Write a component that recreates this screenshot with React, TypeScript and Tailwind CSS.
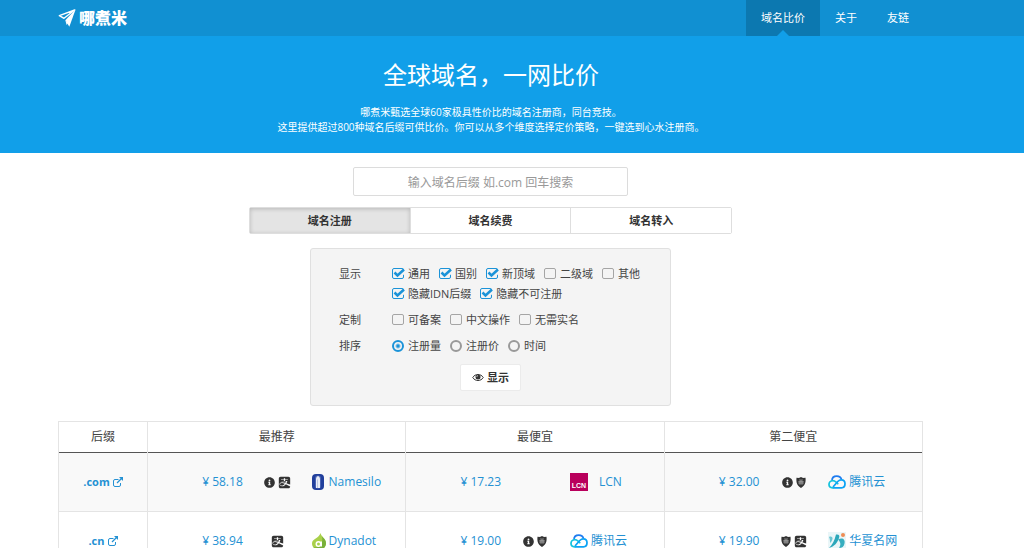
import { useState, type ReactNode } from "react";
import { FaAlipay, FaInfoCircle } from "react-icons/fa";

type Offer = {
  price: string;
  marks: ("info" | "alipay" | "shield")[];
  logo: ReactNode;
  name: string;
};

function PlaneLogo() {
  return (
    <svg viewBox="0 0 54 54" className="h-[18px] w-[18px]">
      <path d="M50 3 4 20l14 8z" fill="none" stroke="#fff" strokeWidth="4" strokeLinejoin="round" />
      <path d="M53 1 22 34l12 19z" fill="#fff" />
      <path d="M22 34l4 14 4-6z" fill="#fff" />
    </svg>
  );
}

function ExternalIcon() {
  return (
    <svg viewBox="0 0 20 20" className="h-[10px] w-[10px]" fill="none" stroke="currentColor" strokeWidth="2">
      <path d="M11 5H4a3 3 0 0 0-3 3v8a3 3 0 0 0 3 3h8a3 3 0 0 0 3-3v-4" />
      <path d="M8 12 17 3" strokeWidth="2.5" />
      <path d="M12 0h8v8z" fill="currentColor" stroke="none" />
    </svg>
  );
}

function EyeIcon() {
  return (
    <svg viewBox="0 0 24 18" className="h-[9px] w-3">
      <path d="M1.500 9C6 1 18 1 22.500 9 18 17 6 17 1.500 9z" fill="none" stroke="#333" strokeWidth="2" />
      <circle cx="12" cy="8" r="5" fill="#333" />
      <path d="M9.500 8q0-3 2.500-3" fill="none" stroke="#fff" strokeWidth="1.200" />
    </svg>
  );
}

function ShieldIcon() {
  return (
    <svg viewBox="0 0 20 22" className="h-[11px] w-[10px]">
      <path d="M10 0c3 2 6 2 9 1.500 1 9-1 16-9 20.500C2 17.500 0 10.500 1 1.500 4 2 7 2 10 0z" fill="#333" />
      <path d="M6 6h8M5 9h10M6 9v5h8V9M10 6v8M6 11.500h8" stroke="#bbb" strokeWidth="1.200" fill="none" />
    </svg>
  );
}

function NamesiloLogo() {
  return (
    <svg viewBox="0 0 24 32" className="mr-0.5 h-4 w-3">
      <rect width="24" height="32" rx="8" fill="#213f9c" />
      <rect x="6" y="3" width="12" height="26" rx="5" fill="#4a64b4" />
      <path d="M8 28V9q1-5 4-5t4 5v19z" fill="#e9edf7" />
      <path d="M10 28V11h1v17z" fill="#8c9bcf" />
    </svg>
  );
}

function DynadotLogo() {
  return (
    <svg viewBox="0 0 28 34" className="h-[17px] w-[14px]">
      <path d="M17 0c1 7 11 11 11 20 0 8-6 14-14 14S0 28 0 21C0 11 14 11 17 0z" fill="#a9d04a" />
      <path d="M20 7c4 4 8 8 8 13 0 8-6 14-14 14-5 0-9-2-11-5 13 1 20-9 17-22z" fill="#79b03a" />
      <circle cx="13" cy="22" r="4.500" fill="none" stroke="#fff" strokeWidth="3" />
      <path d="M18.500 17v10" stroke="#fff" strokeWidth="3" />
    </svg>
  );
}

function LcnLogo() {
  return (
    <span className="mr-2 flex h-[18px] w-[18px] items-end justify-center bg-[#b9005c] font-['Liberation_Sans'] text-[7px] leading-[10px] font-bold text-white">
      LCN
    </span>
  );
}

function TencentLogo() {
  return (
    <svg viewBox="0 0 36 28" className="h-[14px] w-[18px]" fill="none" strokeWidth="3.500" strokeLinejoin="round">
      <path d="M8 11C8 5 12 2 17.500 2S26 5 27 9" stroke="#1f7cf0" />
      <path d="M12 25.500H9C4.500 25.500 2 22 2 18.500S5 11 9.500 11c3 0 5 1.500 7 3.500l4 4" stroke="#14c3dd" />
      <path d="M11 25.500h16c4.500 0 7-3.500 7-8s-3-8-7.500-8c-3 0-5 1.500-7 3.500L10 24" stroke="#0ba3f5" />
    </svg>
  );
}

function HuaxiaLogo() {
  return (
    <svg viewBox="0 0 36 36" className="h-[18px] w-[18px]">
      <rect width="36" height="36" fill="#eaf6f8" />
      <path d="M2 10c4-2 8 0 7 4s-3 6-5 8c0-4 0-8-2-12z" fill="#6cc5d2" />
      <path d="M16 5c6-1 8 2 6 7-3 9-9 17-20 20 7-7 11-15 14-27z" fill="#2ba7ba" />
      <path d="M20 15c9-5 15 0 13 8-1 6-5 9-11 9 4-6 4-11-2-17z" fill="#38aebf" />
      <circle cx="30" cy="6" r="4" fill="#ef8d55" />
    </svg>
  );
}

const rows: { suffix: string; offers: Offer[] }[] = [
  {
    suffix: ".com",
    offers: [
      { price: "58.18", marks: ["info", "alipay"], logo: <NamesiloLogo />, name: "Namesilo" },
      { price: "17.23", marks: [], logo: <LcnLogo />, name: "LCN" },
      { price: "32.00", marks: ["info", "shield"], logo: <TencentLogo />, name: "腾讯云" },
    ],
  },
  {
    suffix: ".cn",
    offers: [
      { price: "38.94", marks: ["alipay"], logo: <DynadotLogo />, name: "Dynadot" },
      { price: "19.00", marks: ["info", "shield"], logo: <TencentLogo />, name: "腾讯云" },
      { price: "19.90", marks: ["shield", "alipay"], logo: <HuaxiaLogo />, name: "华夏名网" },
    ],
  },
];

const showOptions = [
  { label: "通用", on: true },
  { label: "国别", on: true },
  { label: "新顶域", on: true },
  { label: "二级域", on: false },
  { label: "其他", on: false },
  { label: "隐藏IDN后缀", on: true },
  { label: "隐藏不可注册", on: true },
];

const customOptions = [
  { label: "可备案", on: false },
  { label: "中文操作", on: false },
  { label: "无需实名", on: false },
];

function CheckOption({ label, on }: { label: string; on: boolean }) {
  return (
    <label className="flex items-center gap-1">
      <span className="relative flex h-3 w-3">
        <input
          type="checkbox"
          defaultChecked={on}
          className="peer h-[11px] w-3 appearance-none rounded-[2px] border border-[#a5a5a5] checked:border-[#1b93d8]"
        />
        <svg
          viewBox="0 0 26 24"
          className="pointer-events-none absolute top-0 left-0 hidden h-3 w-[13px] peer-checked:block"
        >
          <path d="M20 9 25 4v8l-5 4z" fill="#f4f4f4" />
          <path d="M5 9l6 6L24 3" fill="none" stroke="#1b93d8" strokeWidth="5" />
        </svg>
      </span>
      {label}
    </label>
  );
}

function FilterRow({ title, children }: { title: string; children: ReactNode }) {
  return (
    <fieldset className="flex">
      <legend className="float-left w-[53px] shrink-0">{title}</legend>
      <div className="flex flex-wrap gap-x-[9px]">{children}</div>
    </fieldset>
  );
}

function OfferCell({ offer }: { offer: Offer }) {
  return (
    <td className="border-x border-[#e4e4e4] p-0">
      <div className="grid grid-cols-[95fr_69fr_94fr] items-center">
        <a href="#" className="text-right whitespace-nowrap">
          ¥ {offer.price}
        </a>
        <span className="flex items-center justify-center gap-[3px] text-[#333]">
          {offer.marks.map((mark) => {
            if (mark === "info") return <FaInfoCircle key={mark} size={11} />;
            if (mark === "alipay") return <FaAlipay key={mark} size={13} />;
            return <ShieldIcon key={mark} />;
          })}
        </span>
        <a href="#" className="flex items-center gap-[3px] whitespace-nowrap">
          {offer.logo}
          {offer.name}
        </a>
      </div>
    </td>
  );
}

export default function App() {
  const [tab, setTab] = useState("域名注册");
  const [sort, setSort] = useState("注册量");

  return (
    <div className="bg-white font-['Open_Sans','Noto_Sans_CJK_SC',sans-serif] text-[11px] leading-5 text-[#444]">
      <header className="bg-[#1190d2] pr-[42px] text-white">
        <div className="mx-auto flex h-9 max-w-[866px] items-center justify-between">
          <a href="#" className="flex items-center gap-[3px] text-base font-black">
            <PlaneLogo />
            哪煮米
          </a>
          <nav className="flex leading-[35px]">
            <a href="#" className="relative h-9 bg-[#0c78b0] px-[15px]">
              域名比价
              <span className="absolute bottom-0 left-1/2 -translate-x-1/2 border-x-[6px] border-b-[6px] border-x-transparent border-b-[#119fe9]" />
            </a>
            <a href="#" className="px-[15px]">关于</a>
            <a href="#" className="px-[15px]">友链</a>
          </nav>
        </div>
      </header>

      <section className="bg-[#119fe9] pt-[23px] pr-[42px] pb-[18px] text-center text-white">
        <h1 className="text-2xl">全球域名，一网比价</h1>
        <p className="mt-3.5 text-[10px] leading-[15px]">
          哪煮米甄选全球60家极具性价比的域名注册商，同台竞技。
          <br />
          这里提供超过800种域名后缀可供比价。你可以从多个维度选择定价策略，一键选到心水注册商。
        </p>
      </section>

      <main className="flex flex-col items-center pt-3.5 pr-[43px]">
        <input
          type="text"
          aria-label="域名后缀"
          placeholder="输入域名后缀 如.com 回车搜索"
          className="h-[29px] w-full max-w-[275px] rounded-xs border border-[#dcdcdc] pt-0.5 text-center text-xs placeholder:text-[#999]"
        />

        <div className="mt-[11px] flex w-full max-w-[483px] rounded-xs border border-[#dedede]">
          {["域名注册", "域名续费", "域名转入"].map((name) => (
            <button
              key={name}
              type="button"
              onClick={() => setTab(name)}
              className={`h-[25px] flex-1 border-r border-[#dedede] font-bold text-[#333] last:border-r-0 ${
                tab === name ? "bg-[#e4e4e4] shadow-[inset_0_1px_4px_rgba(0,0,0,0.2)]" : "bg-white"
              }`}
            >
              {name}
            </button>
          ))}
        </div>

        <form
          className="mt-3.5 flex w-full max-w-[361px] flex-col gap-1.5 rounded-[3px] border border-[#e0e0e0] bg-[#f4f4f4] pt-[15px] pr-5 pb-3.5 pl-7"
          onSubmit={(e) => e.preventDefault()}
        >
          <FilterRow title="显示">
            {showOptions.map((option) => (
              <CheckOption key={option.label} {...option} />
            ))}
          </FilterRow>
          <FilterRow title="定制">
            {customOptions.map((option) => (
              <CheckOption key={option.label} {...option} />
            ))}
          </FilterRow>
          <FilterRow title="排序">
            {["注册量", "注册价", "时间"].map((name) => (
              <label key={name} className="flex items-center gap-1">
                <input
                  type="radio"
                  name="sort"
                  checked={sort === name}
                  onChange={() => setSort(name)}
                  className="h-3 w-3 appearance-none rounded-full border-2 border-[#999] checked:border-[#1b93d8] checked:bg-[radial-gradient(circle,#1b93d8_0_1px,transparent_3px)]"
                />
                {name}
              </label>
            ))}
          </FilterRow>
          <button
            type="submit"
            className="mt-0.5 mr-2 flex h-[27px] items-center gap-[3px] self-center rounded-xs border border-[#ebebeb] bg-white px-[11px] font-bold text-[#333]"
          >
            <EyeIcon />
            显示
          </button>
        </form>

        <table className="mt-[15px] w-full max-w-[865px] table-fixed border-collapse border border-[#e4e4e4] text-xs">
          <thead>
            <tr className="h-[31px] border-b border-[#555]">
              <th className="w-[89px] border-x border-[#e4e4e4] font-normal">后缀</th>
              <th className="border-x border-[#e4e4e4] font-normal">最推荐</th>
              <th className="border-x border-[#e4e4e4] font-normal">最便宜</th>
              <th className="border-x border-[#e4e4e4] font-normal">第二便宜</th>
            </tr>
          </thead>
          <tbody className="text-[#2491d3]">
            {rows.map((row) => (
              <tr key={row.suffix} className="h-[59px] border-b border-[#e4e4e4] odd:bg-[#f9f9f9]">
                <td className="p-0">
                  <a href="#" className="flex items-center justify-center gap-[3px] text-[11px] font-bold">
                    {row.suffix}
                    <ExternalIcon />
                  </a>
                </td>
                {row.offers.map((offer) => (
                  <OfferCell key={offer.price} offer={offer} />
                ))}
              </tr>
            ))}
          </tbody>
        </table>
      </main>
    </div>
  );
}
